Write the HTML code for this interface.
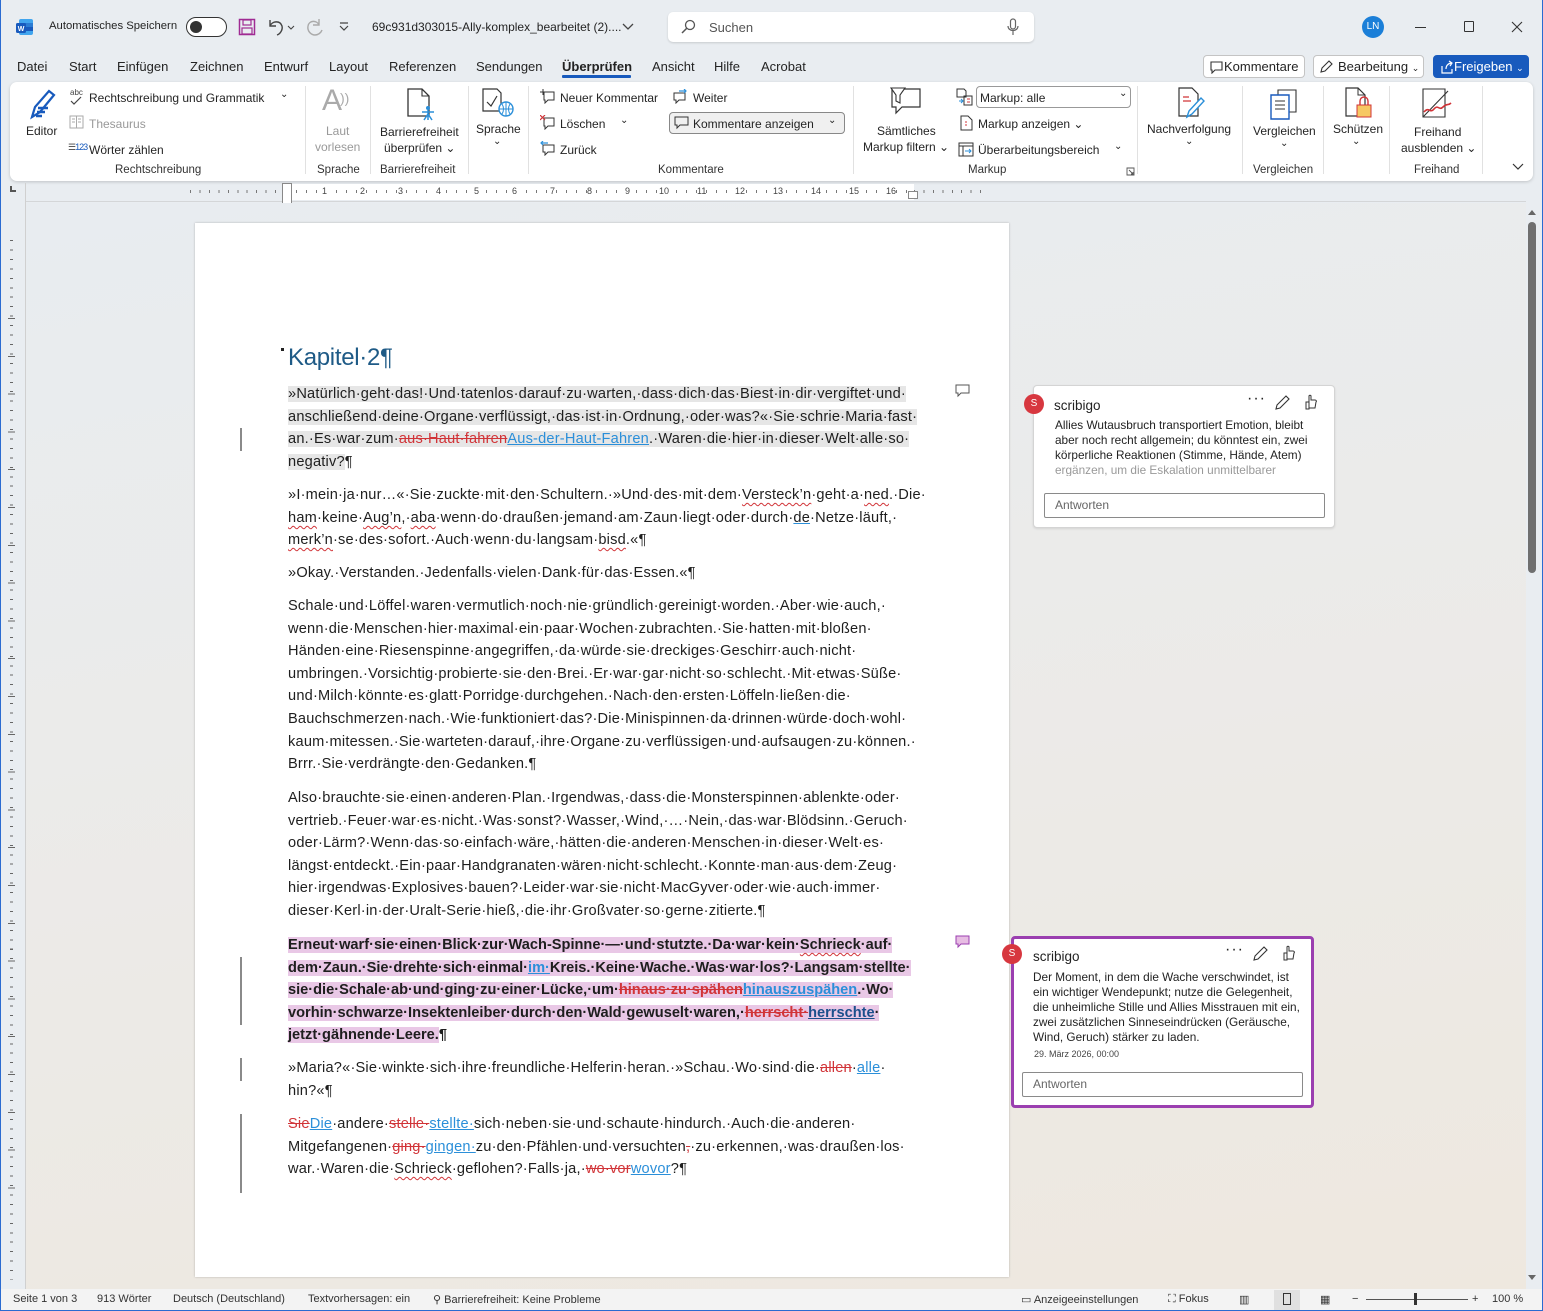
<!DOCTYPE html>
<html><head><meta charset="utf-8">
<style>
*{margin:0;padding:0;box-sizing:border-box}
body{width:1543px;height:1311px;overflow:hidden;position:relative;font-family:"Liberation Sans",sans-serif;color:#242424;background:#e9edf1}
.a{position:absolute;white-space:nowrap}
.t12{font-size:12px}
.t13{font-size:13px}
.win{position:absolute;left:0;top:0;width:1543px;height:1311px;border:1px solid #2a6bd1;border-top:none;pointer-events:none}
.ribbon{position:absolute;left:10px;top:82px;width:1523px;height:99px;background:#fff;border-radius:7px;box-shadow:0 1px 3px rgba(0,0,0,.18)}
.sep{position:absolute;top:86px;width:1px;height:88px;background:#e1e1e1}
.gl{position:absolute;top:164px;font-size:11.5px;color:#333;white-space:nowrap}
.docbg{position:absolute;left:26px;top:203px;width:1500px;height:1086px;background:linear-gradient(170deg,#e8ecf0 0%,#ebebea 40%,#eee8df 100%)}
.page{position:absolute;left:195px;top:223px;width:814px;height:1054px;background:#fff;box-shadow:0 0 2px rgba(0,0,0,.25)}
.l{position:absolute;left:288px;height:22px;line-height:22px;font-size:14.6px;letter-spacing:0.2px;white-space:nowrap;color:#1e1e1e}
.hg{background:#e6e6e6}
.hp{background:#e9c8e6}
.del{color:#d13438;text-decoration:line-through}
.ins{color:#2b8fd9;text-decoration:underline}
.sq{text-decoration:underline wavy #d13438;text-decoration-thickness:1px;text-underline-offset:3px}
.b{font-weight:bold;letter-spacing:0px}
.bar{position:absolute;left:240px;width:2px;background:#8a8a8a}
.cm{position:absolute;background:#fff;border-radius:4px}
.cm .n{position:absolute;font-size:13.5px;color:#222}
.cm .tx{position:absolute;font-size:11.8px;line-height:15px;color:#222;white-space:normal}
.cm .rep{position:absolute;height:25px;border:1px solid #8a8a8a;border-radius:2px;font-size:12px;color:#666;padding:4px 10px}
.av{position:absolute;width:20px;height:20px;border-radius:50%;background:#d7373f;color:#fff;font-size:10px;text-align:center;line-height:20px}
.btn{position:absolute;top:55px;height:23px;border:1px solid #c4c4c4;border-radius:4px;background:#fff;font-size:13px;line-height:21px;padding-left:6px}
</style></head><body>

<!-- Title bar -->
<svg class="a" style="left:16px;top:18px" width="18" height="18" viewBox="0 0 18 18"><rect x="3" y="1" width="14" height="16" rx="2" fill="#41a5ee"/><rect x="3" y="5" width="14" height="4" fill="#2b7cd3"/><rect x="3" y="9" width="14" height="4" fill="#185abd"/><rect x="0" y="5" width="10" height="10" rx="1.5" fill="#185abd"/><text x="5" y="13" font-size="7" fill="#fff" text-anchor="middle" font-weight="bold" font-family="Liberation Sans">W</text></svg>
<div class="a" style="left:49px;top:20px;font-size:11.3px">Automatisches Speichern</div>
<div class="a" style="left:186px;top:17px;width:41px;height:20px;border:1px solid #333;border-radius:10px;background:#fff"><div style="position:absolute;left:3px;top:3px;width:12px;height:12px;border-radius:50%;background:#333"></div></div>
<svg class="a" style="left:238px;top:18px" width="18" height="18" viewBox="0 0 18 18"><rect x="1.5" y="1.5" width="15" height="15" fill="none" stroke="#a02b93" stroke-width="1.5"/><rect x="5" y="2" width="8" height="5" fill="none" stroke="#a02b93" stroke-width="1.2"/><rect x="4" y="10" width="10" height="6" fill="none" stroke="#a02b93" stroke-width="1.2"/></svg>
<svg class="a" style="left:266px;top:17px" width="30" height="20" viewBox="0 0 30 20"><path d="M4 3v6h6M4 9c2-5 10-6 12 0 1 4-2 8-5 9" fill="none" stroke="#444" stroke-width="1.4"/><path d="M22 9l3 3 3-3" fill="none" stroke="#444" stroke-width="1.1"/></svg>
<svg class="a" style="left:305px;top:17px" width="20" height="20" viewBox="0 0 20 20"><path d="M14 2v6h-6M14 8c-2-5-10-5-11 1-1 5 3 9 7 9 3 0 6-2 7-5" fill="none" stroke="#aaa" stroke-width="1.4"/></svg>
<svg class="a" style="left:338px;top:21px" width="12" height="12" viewBox="0 0 12 12"><path d="M2 2h8M2 5l4 4 4-4" fill="none" stroke="#444" stroke-width="1.2"/></svg>
<div class="a t12" style="left:372px;top:20px">69c931d303015-Ally-komplex_bearbeitet (2)....</div>
<svg class="a" style="left:622px;top:22px" width="12" height="10" viewBox="0 0 12 10"><path d="M1 2l5 5 5-5" fill="none" stroke="#444" stroke-width="1.3"/></svg>
<div class="a" style="left:668px;top:12px;width:366px;height:30px;background:#fff;border-radius:5px;box-shadow:0 1px 2px rgba(0,0,0,.15)"></div>
<svg class="a" style="left:680px;top:19px" width="16" height="16" viewBox="0 0 16 16"><circle cx="10" cy="6" r="4.5" fill="none" stroke="#555" stroke-width="1.3"/><path d="M7 9l-5 5" stroke="#555" stroke-width="1.5"/></svg>
<div class="a t13" style="left:709px;top:20px;color:#555">Suchen</div>
<svg class="a" style="left:1006px;top:18px" width="14" height="18" viewBox="0 0 14 18"><rect x="4.5" y="1" width="5" height="10" rx="2.5" fill="none" stroke="#666" stroke-width="1.2"/><path d="M2 8c0 6 10 6 10 0M7 13v4" fill="none" stroke="#666" stroke-width="1.2"/></svg>
<div class="a" style="left:1362px;top:16px;width:22px;height:22px;border-radius:50%;background:#1b7fd8;color:#fff;font-size:10px;text-align:center;line-height:22px">LN</div>
<div class="a" style="left:1415px;top:27px;width:11px;height:1px;background:#333"></div>
<div class="a" style="left:1464px;top:21px;width:10px;height:11px;border:1px solid #333;border-radius:1px"></div>
<svg class="a" style="left:1511px;top:21px" width="12" height="12" viewBox="0 0 12 12"><path d="M1 1l10 10M11 1L1 11" stroke="#333" stroke-width="1.1"/></svg>

<!-- Tabs -->
<div class="a t13" style="left:17px;top:59px">Datei</div>
<div class="a t13" style="left:69px;top:59px">Start</div>
<div class="a t13" style="left:117px;top:59px">Einfügen</div>
<div class="a t13" style="left:190px;top:59px">Zeichnen</div>
<div class="a t13" style="left:264px;top:59px">Entwurf</div>
<div class="a t13" style="left:329px;top:59px">Layout</div>
<div class="a t13" style="left:389px;top:59px">Referenzen</div>
<div class="a t13" style="left:476px;top:59px">Sendungen</div>
<div class="a t13" style="left:562px;top:59px;font-weight:bold;color:#222">Überprüfen</div>
<div class="a" style="left:562px;top:75px;width:69px;height:3px;background:#185abd;border-radius:1px"></div>
<div class="a t13" style="left:652px;top:59px">Ansicht</div>
<div class="a t13" style="left:714px;top:59px">Hilfe</div>
<div class="a t13" style="left:761px;top:59px">Acrobat</div>

<div class="btn" style="left:1203px;width:102px">
<svg style="position:absolute;left:6px;top:5px" width="13" height="13" viewBox="0 0 13 13"><path d="M1 1h11v8H5l-3 3V9H1z" fill="none" stroke="#333" stroke-width="1.1"/></svg><span style="margin-left:14px">Kommentare</span></div>
<div class="btn" style="left:1313px;width:111px">
<svg style="position:absolute;left:5px;top:4px" width="14" height="14" viewBox="0 0 14 14"><path d="M2 12l1-4 7-7 3 3-7 7z" fill="none" stroke="#333" stroke-width="1.1"/></svg><span style="margin-left:18px">Bearbeitung</span> <span style="font-size:9px">⌄</span></div>
<div class="btn" style="left:1433px;width:96px;background:#185abd;border-color:#185abd;color:#fff">
<svg style="position:absolute;left:6px;top:4px" width="14" height="14" viewBox="0 0 14 14"><path d="M2 6v7h10V9M6 9c0-4 3-6 6-6M9 1l3 2-2 3" fill="none" stroke="#fff" stroke-width="1.2"/></svg><span style="margin-left:14px">Freigeben</span> <span style="font-size:9px">⌄</span></div>

<!-- Ribbon -->
<div class="ribbon"></div>
<svg class="a" style="left:24px;top:87px" width="36" height="36" viewBox="0 0 36 36"><path d="M8 30l3-10 14-16 5 4-14 17z" fill="none" stroke="#185abd" stroke-width="2.2"/><path d="M14 21h10M13 25h8M12 29h6" stroke="#185abd" stroke-width="2.4"/></svg>
<div class="a t12" style="left:26px;top:124px">Editor</div>
<div class="a" style="left:70px;top:88px;font-size:8px;color:#444">abc</div>
<svg class="a" style="left:70px;top:96px" width="12" height="10" viewBox="0 0 12 10"><path d="M1 5l3 3 7-7" fill="none" stroke="#444" stroke-width="1.2"/></svg>
<div class="a t12" style="left:89px;top:91px">Rechtschreibung und Grammatik</div>
<div class="a" style="left:280px;top:89px;font-size:10px">⌄</div>
<svg class="a" style="left:69px;top:115px" width="15" height="14" viewBox="0 0 15 14"><rect x="1" y="1" width="13" height="12" fill="none" stroke="#aaa"/><path d="M7.5 1v12M3 4h3M3 7h3M9 4h3M9 7h3" stroke="#aaa"/></svg>
<div class="a t12" style="left:89px;top:117px;color:#999">Thesaurus</div>
<div class="a" style="left:68px;top:142px;font-size:9px;color:#185abd;letter-spacing:-1px"><span style="color:#444">☰</span>123</div>
<div class="a t12" style="left:89px;top:143px">Wörter zählen</div>
<div class="gl" style="left:115px">Rechtschreibung</div>
<div class="sep" style="left:305px"></div>
<div class="a" style="left:322px;top:84px;font-size:30px;color:#aaa;font-weight:300">A</div>
<div class="a" style="left:340px;top:90px;font-size:14px;color:#aaa">))</div>
<div class="a t12" style="left:326px;top:124px;color:#999">Laut</div>
<div class="a t12" style="left:315px;top:140px;color:#999">vorlesen</div>
<div class="gl" style="left:317px">Sprache</div>
<div class="sep" style="left:370px"></div>
<svg class="a" style="left:405px;top:87px" width="32" height="34" viewBox="0 0 32 34"><path d="M3 2h14l7 7v20H3z" fill="none" stroke="#333" stroke-width="1.3"/><path d="M17 2v7h7" fill="none" stroke="#333" stroke-width="1.1"/><circle cx="23" cy="21" r="2" fill="#2b8fd9"/><path d="M17 25h12M23 23v10M19 33l4-6 4 6" stroke="#2b8fd9" stroke-width="1.5" fill="none"/></svg>
<div class="a t12" style="left:380px;top:125px">Barrierefreiheit</div>
<div class="a t12" style="left:384px;top:141px">überprüfen ⌄</div>
<div class="gl" style="left:380px">Barrierefreiheit</div>
<div class="sep" style="left:468px"></div>
<svg class="a" style="left:481px;top:87px" width="34" height="32" viewBox="0 0 34 32"><path d="M2 2h14l4 4v18H2z" fill="none" stroke="#333" stroke-width="1.2"/><path d="M6 15l4 4 6-10" fill="none" stroke="#333" stroke-width="1.2"/><circle cx="25" cy="22" r="7" fill="#fff" stroke="#2b8fd9" stroke-width="1.4"/><path d="M18 22h14M25 15v14M21 17c2 3 2 7 0 10M29 17c-2 3-2 7 0 10" stroke="#2b8fd9" fill="none"/></svg>
<div class="a t12" style="left:476px;top:122px">Sprache</div>
<div class="a" style="left:493px;top:136px;font-size:10px">⌄</div>
<div class="sep" style="left:528px"></div>
<svg class="a" style="left:540px;top:89px" width="15" height="15" viewBox="0 0 15 15"><path d="M4 3h10v8H8l-3 3v-3H4z" fill="none" stroke="#333"/><path d="M3 0v6M0 3h6" stroke="#333"/></svg>
<div class="a t12" style="left:560px;top:91px">Neuer Kommentar</div>
<svg class="a" style="left:540px;top:115px" width="15" height="15" viewBox="0 0 15 15"><path d="M4 3h10v8H8l-3 3v-3H4z" fill="none" stroke="#333"/><path d="M0 0l5 5M5 0L0 5" stroke="#d13438" stroke-width="1.2"/></svg>
<div class="a t12" style="left:560px;top:117px">Löschen</div>
<div class="a" style="left:620px;top:115px;font-size:10px">⌄</div>
<svg class="a" style="left:540px;top:141px" width="15" height="15" viewBox="0 0 15 15"><path d="M3 4h11v7H8l-3 3v-3H3z" fill="none" stroke="#333"/><path d="M8 2H1M3 0L1 2l2 2" fill="none" stroke="#2b8fd9" stroke-width="1.2"/></svg>
<div class="a t12" style="left:560px;top:143px">Zurück</div>
<svg class="a" style="left:673px;top:89px" width="15" height="15" viewBox="0 0 15 15"><path d="M1 4h11v7H6l-3 3v-3H1z" fill="none" stroke="#333"/><path d="M6 2h7M11 0l2 2-2 2" fill="none" stroke="#2b8fd9" stroke-width="1.2"/></svg>
<div class="a t12" style="left:693px;top:91px">Weiter</div>
<div class="a" style="left:669px;top:112px;width:176px;height:22px;border:1px solid #888;border-radius:4px;background:#f0f0f0"></div>
<svg class="a" style="left:674px;top:116px" width="15" height="14" viewBox="0 0 15 14"><path d="M1 1h13v8H6l-3 3V9H1z" fill="none" stroke="#333"/></svg>
<div class="a t12" style="left:693px;top:117px">Kommentare anzeigen</div>
<div class="a" style="left:828px;top:115px;font-size:10px">⌄</div>
<div class="gl" style="left:658px">Kommentare</div>
<div class="sep" style="left:853px"></div>
<svg class="a" style="left:889px;top:87px" width="34" height="30" viewBox="0 0 34 30"><path d="M3 2h28v18H13l-6 6v-6H3z" fill="none" stroke="#333" stroke-width="1.2"/><path d="M2 1h14l-5 7v8l-4-2V8z" fill="#fff" stroke="#333" stroke-width="1.1"/></svg>
<div class="a t12" style="left:877px;top:124px">Sämtliches</div>
<div class="a t12" style="left:863px;top:140px">Markup filtern ⌄</div>
<svg class="a" style="left:956px;top:88px" width="18" height="18" viewBox="0 0 18 18"><path d="M1 1h7l2 2v6H1z M8 8h8v9H8z" fill="none" stroke="#333"/><path d="M11 11h3M11 14h3" stroke="#d13438"/><path d="M3 13h4M5 11l2 2-2 2" stroke="#2b8fd9" fill="none"/></svg>
<div class="a" style="left:976px;top:86px;width:155px;height:22px;border:1px solid #999;border-radius:4px;background:#fff"></div>
<div class="a t12" style="left:980px;top:91px">Markup: alle</div>
<div class="a" style="left:1119px;top:88px;font-size:10px">⌄</div>
<svg class="a" style="left:960px;top:115px" width="13" height="16" viewBox="0 0 13 16"><path d="M1 1h7l4 4v10H1z" fill="none" stroke="#333"/><path d="M5 7h2M5 10h2" stroke="#d13438"/></svg>
<div class="a t12" style="left:978px;top:117px">Markup anzeigen ⌄</div>
<svg class="a" style="left:958px;top:142px" width="16" height="15" viewBox="0 0 16 15"><rect x="1" y="1" width="14" height="13" fill="none" stroke="#333"/><path d="M1 4h14M5 4v10" stroke="#333"/><path d="M7 9h6M11 7l2 2-2 2" stroke="#2b8fd9" fill="none"/></svg>
<div class="a t12" style="left:978px;top:143px">Überarbeitungsbereich</div>
<div class="a" style="left:1114px;top:141px;font-size:10px">⌄</div>
<div class="gl" style="left:968px">Markup</div>
<svg class="a" style="left:1126px;top:167px" width="9" height="9" viewBox="0 0 9 9"><path d="M1 1h7v7H1zM3 3l4 4M5 7h2V5" fill="none" stroke="#555" stroke-width=".9"/></svg>
<div class="sep" style="left:1137px"></div>
<svg class="a" style="left:1175px;top:86px" width="32" height="34" viewBox="0 0 32 34"><path d="M4 2h13l6 6v22H4z" fill="none" stroke="#333" stroke-width="1.2"/><path d="M8 11h6M8 15h8" stroke="#d13438" stroke-width="1.2"/><path d="M12 31l2-6 12-13 3 3-12 13z" fill="#fff" stroke="#2b8fd9" stroke-width="1.4"/></svg>
<div class="a t12" style="left:1147px;top:122px">Nachverfolgung</div>
<div class="a" style="left:1185px;top:136px;font-size:10px">⌄</div>
<div class="sep" style="left:1242px"></div>
<svg class="a" style="left:1268px;top:88px" width="32" height="32" viewBox="0 0 32 32"><path d="M10 2h18v22H10z" fill="none" stroke="#333" stroke-width="1.1"/><path d="M3 7h18v24H3z" fill="#fff" stroke="#185abd" stroke-width="1.4"/><path d="M7 13h10M7 17h10M7 21h10" stroke="#333"/></svg>
<div class="a t12" style="left:1253px;top:124px">Vergleichen</div>
<div class="a" style="left:1280px;top:138px;font-size:10px">⌄</div>
<div class="gl" style="left:1253px">Vergleichen</div>
<div class="sep" style="left:1323px"></div>
<svg class="a" style="left:1343px;top:86px" width="32" height="34" viewBox="0 0 32 34"><path d="M3 2h12l7 7v21H3z" fill="none" stroke="#333" stroke-width="1.2"/><path d="M15 2v7h7" fill="none" stroke="#333"/><rect x="14" y="19" width="14" height="12" fill="#f6c863" stroke="#d13438"/><path d="M17 19v-4a4 4 0 018 0v4" fill="none" stroke="#d13438" stroke-width="1.4"/></svg>
<div class="a t12" style="left:1333px;top:122px">Schützen</div>
<div class="a" style="left:1352px;top:136px;font-size:10px">⌄</div>
<div class="sep" style="left:1389px"></div>
<svg class="a" style="left:1420px;top:87px" width="34" height="32" viewBox="0 0 34 32"><path d="M3 2h22v28H3z" fill="none" stroke="#333" stroke-width="1.1"/><path d="M3 30L28 4" stroke="#333" stroke-width="1.1"/><path d="M4 25c5-6 6 2 10-3s5 2 9-2 5-1 8-4" fill="none" stroke="#d13438" stroke-width="1.6"/></svg>
<div class="a t12" style="left:1414px;top:125px">Freihand</div>
<div class="a t12" style="left:1401px;top:141px">ausblenden ⌄</div>
<div class="gl" style="left:1414px">Freihand</div>
<div class="sep" style="left:1482px"></div>
<svg class="a" style="left:1512px;top:162px" width="12" height="10" viewBox="0 0 12 10"><path d="M1 2l5 5 5-5" fill="none" stroke="#333" stroke-width="1.2"/></svg>

<!-- Rulers -->
<div class="a" style="left:10px;top:186px;width:6px;height:6px;border-left:2px solid #555;border-bottom:2px solid #555"></div>
<div class="a" style="left:25px;top:183px;width:1px;height:20px;background:#d0d0d0"></div>
<div class="a" style="left:26px;top:201px;width:1500px;height:1px;background:#d4d6d8"></div>
<div class="a" style="left:190px;top:190px;width:97px;height:3px;background:repeating-linear-gradient(90deg,#777 0 1px,transparent 1px 9.45px)"></div>
<div class="a" style="left:287px;top:184px;width:627px;height:16px;background:#fff"></div>
<div class="a" style="left:287px;top:190px;width:627px;height:3px;background:repeating-linear-gradient(90deg,transparent 0 9px,#777 9px 10px,transparent 10px 9.45px)"></div>
<div class="a" style="left:914px;top:190px;width:70px;height:3px;background:repeating-linear-gradient(90deg,#777 0 1px,transparent 1px 9.45px)"></div>
<div class="a" style="left:0;top:186px;font-size:9px;color:#444">
<span class="a" style="left:322px;background:#fff">1</span><span class="a" style="left:360px;background:#fff">2</span><span class="a" style="left:398px;background:#fff">3</span><span class="a" style="left:436px;background:#fff">4</span><span class="a" style="left:474px;background:#fff">5</span><span class="a" style="left:512px;background:#fff">6</span><span class="a" style="left:550px;background:#fff">7</span><span class="a" style="left:587px;background:#fff">8</span><span class="a" style="left:625px;background:#fff">9</span><span class="a" style="left:659px;background:#fff">10</span><span class="a" style="left:697px;background:#fff">11</span><span class="a" style="left:735px;background:#fff">12</span><span class="a" style="left:773px;background:#fff">13</span><span class="a" style="left:811px;background:#fff">14</span><span class="a" style="left:849px;background:#fff">15</span><span class="a" style="left:886px;background:#fff">16</span></div>
<div class="a" style="left:282px;top:183px;width:10px;height:21px;border:1px solid #888;background:#fff"></div>
<div class="a" style="left:908px;top:191px;width:10px;height:8px;border:1px solid #888;background:#fff"></div>

<div class="docbg"></div>
<div class="a" style="left:25px;top:203px;width:1px;height:1086px;background:#d0d0d0"></div>
<div class="a" style="left:10px;top:240px;width:3px;height:1040px;background:repeating-linear-gradient(180deg,#666 0 1px,transparent 1px 9.45px)"></div>
<div class="a" style="left:8px;top:318px;width:7px;height:900px;background:repeating-linear-gradient(180deg,#666 0 1px,transparent 1px 37.8px)"></div>

<!-- Page -->
<div class="page"></div>
<div class="a" style="left:281px;top:348px;width:3px;height:3px;background:#222"></div>
<div class="a" style="left:288px;top:344px;font-size:24px;color:#1e5a86;letter-spacing:-0.3px">Kapitel·2¶</div>

<div class="l" style="top:383px"><span class="hg">»Natürlich·geht·das!·Und·tatenlos·darauf·zu·warten,·dass·dich·das·Biest·in·dir·vergiftet·und·</span></div>
<div class="l" style="top:406px"><span class="hg">anschließend·deine·Organe·verflüssigt,·das·ist·in·Ordnung,·oder·was?«·Sie·schrie·Maria·fast·</span></div>
<div class="l" style="top:428px"><span class="hg">an.·Es·war·zum·<span class="del">aus·Haut·fahren</span><span class="ins">Aus-der-Haut-Fahren</span>.·Waren·die·hier·in·dieser·Welt·alle·so·</span></div>
<div class="l" style="top:451px"><span class="hg">negativ?</span>¶</div>

<div class="l" style="top:484px">»I·mein·ja·nur…«·Sie·zuckte·mit·den·Schultern.·»Und·des·mit·dem·<span class="sq">Versteck’n</span>·geht·a·<span class="sq">ned</span>.·Die·</div>
<div class="l" style="top:507px"><span class="sq">ham</span>·keine·<span class="sq">Aug’n</span>,·<span class="sq">aba</span>·wenn·do·draußen·jemand·am·Zaun·liegt·oder·durch·<span class="ins" style="color:#1e1e1e;text-decoration-color:#2b8fd9">de</span>·Netze·läuft,·</div>
<div class="l" style="top:529px"><span class="sq">merk’n</span>·se·des·sofort.·Auch·wenn·du·langsam·<span class="sq">bisd</span>.«¶</div>

<div class="l" style="top:562px">»Okay.·Verstanden.·Jedenfalls·vielen·Dank·für·das·Essen.«¶</div>

<div class="l" style="top:595px">Schale·und·Löffel·waren·vermutlich·noch·nie·gründlich·gereinigt·worden.·Aber·wie·auch,·</div>
<div class="l" style="top:618px">wenn·die·Menschen·hier·maximal·ein·paar·Wochen·zubrachten.·Sie·hatten·mit·bloßen·</div>
<div class="l" style="top:640px">Händen·eine·Riesenspinne·angegriffen,·da·würde·sie·dreckiges·Geschirr·auch·nicht·</div>
<div class="l" style="top:663px">umbringen.·Vorsichtig·probierte·sie·den·Brei.·Er·war·gar·nicht·so·schlecht.·Mit·etwas·Süße·</div>
<div class="l" style="top:685px">und·Milch·könnte·es·glatt·Porridge·durchgehen.·Nach·den·ersten·Löffeln·ließen·die·</div>
<div class="l" style="top:708px">Bauchschmerzen·nach.·Wie·funktioniert·das?·Die·Minispinnen·da·drinnen·würde·doch·wohl·</div>
<div class="l" style="top:731px">kaum·mitessen.·Sie·warteten·darauf,·ihre·Organe·zu·verflüssigen·und·aufsaugen·zu·können.·</div>
<div class="l" style="top:753px">Brrr.·Sie·verdrängte·den·Gedanken.¶</div>

<div class="l" style="top:787px">Also·brauchte·sie·einen·anderen·Plan.·Irgendwas,·dass·die·Monsterspinnen·ablenkte·oder·</div>
<div class="l" style="top:810px">vertrieb.·Feuer·war·es·nicht.·Was·sonst?·Wasser,·Wind,·…·Nein,·das·war·Blödsinn.·Geruch·</div>
<div class="l" style="top:832px">oder·Lärm?·Wenn·das·so·einfach·wäre,·hätten·die·anderen·Menschen·in·dieser·Welt·es·</div>
<div class="l" style="top:855px">längst·entdeckt.·Ein·paar·Handgranaten·wären·nicht·schlecht.·Konnte·man·aus·dem·Zeug·</div>
<div class="l" style="top:877px">hier·irgendwas·Explosives·bauen?·Leider·war·sie·nicht·MacGyver·oder·wie·auch·immer·</div>
<div class="l" style="top:900px">dieser·Kerl·in·der·Uralt-Serie·hieß,·die·ihr·Großvater·so·gerne·zitierte.¶</div>

<div class="l b" style="top:934px"><span class="hp">Erneut·warf·sie·einen·Blick·zur·Wach-Spinne·—·und·stutzte.·Da·war·kein·<span class="sq">Schrieck</span>·auf·</span></div>
<div class="l b" style="top:957px"><span class="hp">dem·Zaun.·Sie·drehte·sich·einmal·<span class="ins">im·</span>Kreis.·Keine·Wache.·Was·war·los?·Langsam·stellte·</span></div>
<div class="l b" style="top:979px"><span class="hp">sie·die·Schale·ab·und·ging·zu·einer·Lücke,·um·<span class="del">hinaus·zu·spähen</span><span class="ins">hinauszuspähen</span>.·Wo·</span></div>
<div class="l b" style="top:1002px"><span class="hp">vorhin·schwarze·Insektenleiber·durch·den·Wald·gewuselt·waren,·<span class="del">herrscht·</span><span class="ins" style="color:#1b4f8c">herrschte</span>·</span></div>
<div class="l b" style="top:1024px"><span class="hp">jetzt·gähnende·Leere.</span>¶</div>

<div class="l" style="top:1057px">»Maria?«·Sie·winkte·sich·ihre·freundliche·Helferin·heran.·»Schau.·Wo·sind·die·<span class="del">allen</span>·<span class="ins">alle</span>·</div>
<div class="l" style="top:1080px">hin?«¶</div>

<div class="l" style="top:1113px"><span class="del">Sie</span><span class="ins">Die</span>·andere·<span class="del">stelle·</span><span class="ins">stellte·</span>sich·neben·sie·und·schaute·hindurch.·Auch·die·anderen·</div>
<div class="l" style="top:1136px">Mitgefangenen·<span class="del">ging·</span><span class="ins">gingen·</span>zu·den·Pfählen·und·versuchten<span class="del">,</span>·zu·erkennen,·was·draußen·los·</div>
<div class="l" style="top:1158px">war.·Waren·die·<span class="sq">Schrieck</span>·geflohen?·Falls·ja,·<span class="del">wo·vor</span><span class="ins">wovor</span>?¶</div>

<div class="bar" style="top:428px;height:23px"></div>
<div class="bar" style="top:957px;height:68px"></div>
<div class="bar" style="top:1058px;height:23px"></div>
<div class="bar" style="top:1114px;height:79px"></div>

<svg class="a" style="left:955px;top:384px" width="15" height="14" viewBox="0 0 15 14"><path d="M1 1h13v8H6l-3 3V9H1z" fill="#fff" stroke="#555"/></svg>
<svg class="a" style="left:955px;top:935px" width="15" height="14" viewBox="0 0 15 14"><path d="M1 1h13v8H6l-3 3V9H1z" fill="#e7bde3" stroke="#9b3fb0"/></svg>

<!-- Comments -->
<div class="cm" style="left:1033px;top:385px;width:302px;height:143px;border:1px solid #d4d4d4;box-shadow:0 1px 2px rgba(0,0,0,.1)">
<div class="n" style="left:20px;top:12px">scribigo</div>
<div class="a" style="left:213px;top:4px;font-size:16px;letter-spacing:1px">···</div>
<svg class="a" style="left:240px;top:8px" width="18" height="17" viewBox="0 0 18 17"><path d="M2 15l1-4 9-9 3 3-9 9z" fill="none" stroke="#333" stroke-width="1.1"/></svg>
<svg class="a" style="left:270px;top:8px" width="14" height="17" viewBox="0 0 14 17"><path d="M5 7V2c0-1 2-1 2 0v4h4c1 0 2 1 1 2l-1 6H5zM2 8h3v7H2z" fill="none" stroke="#333"/></svg>
<div class="tx" style="left:21px;top:32px;width:262px;height:58px;overflow:hidden">Allies Wutausbruch transportiert Emotion, bleibt aber noch recht allgemein; du könntest ein, zwei körperliche Reaktionen (Stimme, Hände, Atem) <span style="color:#999">ergänzen, um die Eskalation unmittelbarer</span></div>
<div class="rep" style="left:10px;top:107px;width:281px">Antworten</div>
</div>
<div class="av" style="left:1024px;top:394px">S</div>

<div class="cm" style="left:1011px;top:936px;width:303px;height:172px;border:3px solid #9b3fb0;border-radius:4px">
<div class="n" style="left:19px;top:10px">scribigo</div>
<div class="a" style="left:211px;top:2px;font-size:16px;letter-spacing:1px">···</div>
<svg class="a" style="left:238px;top:6px" width="18" height="17" viewBox="0 0 18 17"><path d="M2 15l1-4 9-9 3 3-9 9z" fill="none" stroke="#333" stroke-width="1.1"/></svg>
<svg class="a" style="left:268px;top:6px" width="14" height="17" viewBox="0 0 14 17"><path d="M5 7V2c0-1 2-1 2 0v4h4c1 0 2 1 1 2l-1 6H5zM2 8h3v7H2z" fill="none" stroke="#333"/></svg>
<div class="tx" style="left:19px;top:31px;width:268px">Der Moment, in dem die Wache verschwindet, ist ein wichtiger Wendepunkt; nutze die Gelegenheit, die unheimliche Stille und Allies Misstrauen mit ein, zwei zusätzlichen Sinneseindrücken (Geräusche, Wind, Geruch) stärker zu laden.</div>
<div class="a" style="left:20px;top:110px;font-size:9px;color:#444">29. März 2026, 00:00</div>
<div class="rep" style="left:8px;top:133px;width:281px">Antworten</div>
</div>
<div class="av" style="left:1002px;top:944px">S</div>

<!-- Scrollbar -->
<svg class="a" style="left:1527px;top:208px" width="10" height="8" viewBox="0 0 10 8"><path d="M1 7l4-5 4 5z" fill="#666"/></svg>
<div class="a" style="left:1528px;top:222px;width:8px;height:351px;background:#6f6f6f;border-radius:4px"></div>
<svg class="a" style="left:1527px;top:1274px" width="10" height="8" viewBox="0 0 10 8"><path d="M1 1l4 5 4-5z" fill="#666"/></svg>

<!-- Status bar -->
<div class="a" style="left:1px;top:1289px;width:1541px;height:22px;background:#f3f3f3"></div>
<div class="a" style="left:0;top:1293px;font-size:11px;color:#333">
<span class="a" style="left:13px">Seite 1 von 3</span><span class="a" style="left:97px">913 Wörter</span><span class="a" style="left:173px">Deutsch (Deutschland)</span><span class="a" style="left:308px">Textvorhersagen: ein</span><span class="a" style="left:433px">⚲ Barrierefreiheit: Keine Probleme</span>
<span class="a" style="left:1021px">▭ Anzeigeeinstellungen</span><span class="a" style="left:1168px">⛶ Fokus</span>
<span class="a" style="left:1239px">▥</span><span class="a" style="left:1320px">▦</span>
<span class="a" style="left:1352px">−</span><span class="a" style="left:1472px">+</span><span class="a" style="left:1492px">100 %</span></div>
<div class="a" style="left:1274px;top:1290px;width:26px;height:20px;background:#e0e0e0"></div>
<div class="a" style="left:1283px;top:1293px;width:8px;height:12px;border:1px solid #333"></div>
<div class="a" style="left:1366px;top:1299px;width:102px;height:1px;background:#555"></div>
<div class="a" style="left:1414px;top:1293px;width:3px;height:12px;background:#333"></div>

<div class="win"></div>
</body></html>
